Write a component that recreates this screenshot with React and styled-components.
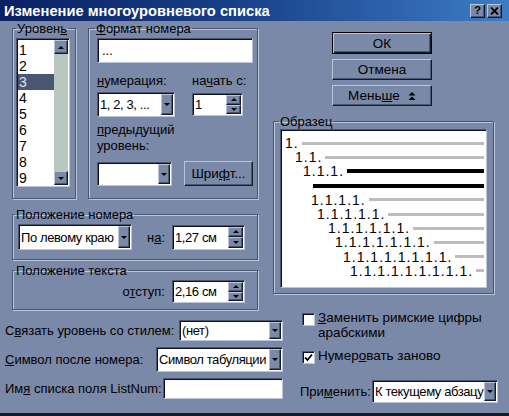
import React from 'react';
import styled, { createGlobalStyle, css } from 'styled-components';

const C = {
  bg: '#7b89a9',
  light: '#bcc5da',
  dark: '#4b556f',
  darker: '#151a27',
  track: '#b8c7bf',
  sel: '#4b5772',
};

const GlobalStyle = createGlobalStyle`
  html, body { margin: 0; padding: 0; background: ${C.bg}; }
  body { font-family: "Liberation Sans", Arial, sans-serif; font-size: 13px; color: #000; }
  * { box-sizing: border-box; }
`;

const sunken = css`
  background: #fff;
  border: 1px solid;
  border-color: ${C.dark} ${C.light} ${C.light} ${C.dark};
  box-shadow: inset 1px 1px 0 #0d111c;
`;

const raised = css`
  background: ${C.bg};
  border: 1px solid;
  border-color: ${C.light} ${C.darker} ${C.darker} ${C.light};
  box-shadow: inset -1px -1px 0 ${C.dark};
`;

const Window = styled.div`
  width: 509px;
  height: 416px;
  background: ${C.bg};
  border-bottom: 3px solid ${C.darker};
  display: flex;
  flex-direction: column;
  overflow: hidden;
`;

const TitleBar = styled.div`
  height: 21px;
  flex: none;
  display: flex;
  align-items: center;
  justify-content: space-between;
  padding: 0 7px 0 4px;
  background: linear-gradient(90deg, #0a2062 0%, #173f88 45%, #3d7cc4 100%);
`;

const Title = styled.span`
  color: #fff;
  font-family: "Liberation Sans", Arial, sans-serif;
  font-weight: bold;
  font-size: 14.7px;
  white-space: nowrap;
`;

const TitleButtons = styled.div`
  display: flex;
  gap: 2px;
`;

const TitleButton = styled.span`
  ${raised}
  width: 15px;
  height: 14px;
  display: flex;
  align-items: center;
  justify-content: center;
  font-weight: bold;
  font-size: 11px;
  line-height: 1;
`;

const Top = styled.div`
  display: flex;
  gap: 15px;
  padding-left: 12px;
`;

const LeftCol = styled.div`
  width: 246px;
  display: flex;
  flex-direction: column;
`;

const GroupRow = styled.div`
  display: flex;
  gap: 12px;
`;

const Group = styled.fieldset`
  margin: ${p => p.$mt || 0}px 0 0 0;
  padding: 0;
  min-width: 0;
  width: ${p => p.$w}px;
  height: ${p => p.$h}px;
  border: 1px solid ${C.dark};
  box-shadow: inset 1px 1px 0 ${C.light}, 1px 1px 0 ${C.light};
  display: flex;
  flex-direction: column;
`;

const Legend = styled.legend`
  padding: 0 1px;
  margin-left: ${p => p.$ml || 3}px;
  line-height: 15px;
  font-size: 13px;
`;

const U = styled.span`
  text-decoration: underline;
`;

const ListBox = styled.div`
  ${sunken}
  width: 54px;
  height: 149px;
  margin: 2px 0 0 3px;
  display: flex;
  padding: 1px;
`;

const ListItems = styled.div`
  flex: 1;
  padding-top: 2px;
  display: flex;
  flex-direction: column;
`;

const ListItem = styled.div`
  height: 16px;
  line-height: 16px;
  padding-left: 1px;
  font-size: 14px;
  ${p => p.$sel && css`
    background: ${C.sel};
    color: #dfe3ee;
  `}
`;

const ScrollBar = styled.div`
  width: 14px;
  background: ${C.track};
  display: flex;
  flex-direction: column;
  justify-content: space-between;
`;

const SmallBtn = styled.span`
  ${raised}
  width: 14px;
  height: 14px;
  display: flex;
  align-items: center;
  justify-content: center;
`;

const Tri = styled.span`
  width: 0;
  height: 0;
  border-left: 3px solid transparent;
  border-right: 3px solid transparent;
  ${p => p.$up
    ? css`border-bottom: 3px solid #000;`
    : css`border-top: 3px solid #000;`}
`;

const FormatInner = styled.div`
  display: flex;
  flex-direction: column;
  padding: 2px 0 0 8px;
`;

const TextBox = styled.div`
  ${sunken}
  width: ${p => p.$w}px;
  height: ${p => p.$h}px;
  display: flex;
  align-items: center;
  padding: 0 4px;
  flex: none;
  white-space: nowrap;
`;

const FormatRow = styled.div`
  display: flex;
  margin-top: ${p => p.$mt}px;
  gap: ${p => p.$gap || 0}px;
  align-items: flex-start;
`;

const FieldCol = styled.div`
  width: ${p => p.$w}px;
  display: flex;
  flex-direction: column;
  gap: ${p => p.$gap}px;
  align-items: flex-start;
`;

const Label = styled.span`
  line-height: 15px;
  white-space: nowrap;
  margin-left: ${p => (p.$auto ? 'auto' : '0')};
`;

const WrapLabel = styled.div`
  width: 95px;
  line-height: 16px;
  margin-top: 5px;
`;

const Select = styled.div`
  ${sunken}
  width: ${p => p.$w}px;
  height: ${p => p.$h}px;
  margin-top: ${p => p.$mt || 0}px;
  display: flex;
  padding: 1px;
  flex: none;
`;

const SelectValue = styled.span`
  flex: 1;
  min-width: 0;
  display: flex;
  align-items: center;
  padding-left: 1px;
  white-space: nowrap;
  overflow: hidden;
  font-size: 13px;
  letter-spacing: -0.4px;
`;

const DropBtn = styled.span`
  ${raised}
  width: 12px;
  flex: none;
  display: flex;
  align-items: center;
  justify-content: center;
`;

const Spin = styled.div`
  ${sunken}
  width: ${p => p.$w}px;
  height: ${p => p.$h}px;
  margin-top: ${p => p.$mt || 0}px;
  display: flex;
  padding: 1px;
  flex: none;
`;

const SpinButtons = styled.span`
  width: 15px;
  display: flex;
  flex-direction: column;
`;

const SpinBtn = styled.span`
  ${raised}
  flex: 1;
  display: flex;
  align-items: center;
  justify-content: center;
`;

const PushButton = styled.div`
  ${raised}
  width: ${p => p.$w}px;
  height: ${p => p.$h}px;
  display: flex;
  align-items: center;
  justify-content: center;
  gap: 8px;
  flex: none;
  font-size: 13.5px;
  ${p => p.$default && css`
    border: 1px solid #000;
    box-shadow: inset 1px 1px 0 ${C.light}, inset -1px -1px 0 ${C.darker}, inset -2px -2px 0 ${C.dark};
  `}
`;

const GroupRowInner = styled.div`
  display: flex;
  align-items: center;
  gap: 7px;
  padding: ${p => p.$pad};
  justify-content: ${p => p.$justify || 'flex-start'};
  margin-top: ${p => p.$mt}px;
`;

const RightCol = styled.div`
  width: 221px;
  display: flex;
  flex-direction: column;
`;

const ButtonStack = styled.div`
  display: flex;
  flex-direction: column;
  gap: 5px;
  margin: 11px 0 0 59px;
`;

const PreviewBox = styled.div`
  ${sunken}
  width: 207px;
  height: 159px;
  margin-left: 6px;
  padding: 6px 2px 0 1px;
  display: flex;
  flex-direction: column;
`;

const PreviewRow = styled.div`
  height: 14.2px;
  display: flex;
  align-items: center;
  padding-left: ${p => p.$indent}px;
`;

const PreviewNum = styled.span`
  font-size: 14px;
  line-height: 14px;
  letter-spacing: 1px;
  white-space: nowrap;
  margin-right: 3px;
`;

const PreviewLine = styled.span`
  flex: 1;
  height: ${p => (p.$dark ? 4 : 3)}px;
  background: ${p => (p.$dark ? '#000' : '#bdbdbd')};
`;

const Bottom = styled.div`
  display: flex;
  padding-left: 5px;
`;

const BottomLeft = styled.div`
  width: 278px;
  display: flex;
  flex-direction: column;
`;

const FieldRow = styled.div`
  display: flex;
  align-items: center;
  justify-content: space-between;
  margin-top: ${p => p.$mt}px;
`;

const BottomRight = styled.div`
  margin-left: 17px;
  width: 198px;
  display: flex;
  flex-direction: column;
`;

const CheckRow = styled.div`
  display: flex;
  align-items: flex-start;
  gap: 3px;
  padding-left: 2px;
  margin-top: ${p => p.$mt}px;
`;

const CheckBox = styled.span`
  ${sunken}
  width: 13px;
  height: 13px;
  flex: none;
  margin-top: 3px;
  display: flex;
  align-items: center;
  justify-content: center;
`;

const CheckText = styled.span`
  line-height: 15px;
  font-size: 13.5px;
`;

const DropSelect = ({ w, h, mt, children }) => (
  <Select $w={w} $h={h} $mt={mt}>
    <SelectValue>{children}</SelectValue>
    <DropBtn><Tri /></DropBtn>
  </Select>
);

const SpinBox = ({ w, h, mt, children }) => (
  <Spin $w={w} $h={h} $mt={mt}>
    <SelectValue>{children}</SelectValue>
    <SpinButtons>
      <SpinBtn><Tri $up /></SpinBtn>
      <SpinBtn><Tri /></SpinBtn>
    </SpinButtons>
  </Spin>
);

const previewRows = [
  { n: 1, indent: 3 },
  { n: 2, indent: 13 },
  { n: 3, indent: 21, dark: true },
  { n: 0, indent: 31, dark: true },
  { n: 4, indent: 29 },
  { n: 5, indent: 35 },
  { n: 6, indent: 46 },
  { n: 7, indent: 53 },
  { n: 8, indent: 61 },
  { n: 9, indent: 68 },
];

export default function App() {
  return (
    <>
      <GlobalStyle />
      <Window>
        <TitleBar>
          <Title>Изменение многоуровневого списка</Title>
          <TitleButtons>
            <TitleButton>?</TitleButton>
            <TitleButton>
              <svg width="9" height="8" viewBox="0 0 9 8">
                <path d="M1 0.5 L8 7.5 M8 0.5 L1 7.5" stroke="#000" strokeWidth="1.8" />
              </svg>
            </TitleButton>
          </TitleButtons>
        </TitleBar>

        <Top>
          <LeftCol>
            <GroupRow>
              <Group $w={64} $h={178}>
                <Legend $ml={3}>Уровен<U>ь</U></Legend>
                <ListBox>
                  <ListItems>
                    {[1, 2, 3, 4, 5, 6, 7, 8, 9].map(n => (
                      <ListItem key={n} $sel={n === 3}>{n}</ListItem>
                    ))}
                  </ListItems>
                  <ScrollBar>
                    <SmallBtn><Tri $up /></SmallBtn>
                    <SmallBtn><Tri /></SmallBtn>
                  </ScrollBar>
                </ListBox>
              </Group>
              <Group $w={170} $h={178}>
                <Legend $ml={6}><U>Ф</U>ормат номера</Legend>
                <FormatInner>
                  <TextBox $w={156} $h={25}>...</TextBox>
                  <FormatRow $mt={10}>
                    <FieldCol $w={95} $gap={4}>
                      <Label><U>н</U>умерация:</Label>
                      <DropSelect w={78} h={25}>1, 2, 3, ...</DropSelect>
                    </FieldCol>
                    <FieldCol $w={60} $gap={5}>
                      <Label>на<U>ч</U>ать с:</Label>
                      <SpinBox w={51} h={23}>1</SpinBox>
                    </FieldCol>
                  </FormatRow>
                  <WrapLabel><U>п</U>редыдущий уровень:</WrapLabel>
                  <FormatRow $mt={7} $gap={12}>
                    <DropSelect w={75} h={24} mt={1}></DropSelect>
                    <PushButton $w={69} $h={25}><span>Шри<U>ф</U>т...</span></PushButton>
                  </FormatRow>
                </FormatInner>
              </Group>
            </GroupRow>

            <Group $w={246} $h={53} $mt={8}>
              <Legend $ml={2}>Положение номера</Legend>
              <GroupRowInner $pad="0 12px 0 5px" $mt={2}>
                <DropSelect w={114} h={26}>По левому краю</DropSelect>
                <Label $auto>н<U>а</U>:</Label>
                <SpinBox w={73} h={25}>1,27 см</SpinBox>
              </GroupRowInner>
            </Group>

            <Group $w={246} $h={47} $mt={3}>
              <Legend $ml={2}>Положение текста</Legend>
              <GroupRowInner $pad="0 12px 0 5px" $mt={2} $justify="flex-end">
                <Label>о<U>т</U>ступ:</Label>
                <SpinBox w={73} h={23}>2,16 см</SpinBox>
              </GroupRowInner>
            </Group>
          </LeftCol>

          <RightCol>
            <ButtonStack>
              <PushButton $w={100} $h={22} $default><span>ОК</span></PushButton>
              <PushButton $w={100} $h={21}><span>Отмена</span></PushButton>
              <PushButton $w={100} $h={21}>
                <span>Мень<U>ш</U>е</span>
                <svg width="8" height="8" viewBox="0 0 8 8">
                  <path d="M0.5 3.5 L4 0 L7.5 3.5 Z M0.5 8 L4 4.5 L7.5 8 Z" fill="#000" />
                </svg>
              </PushButton>
            </ButtonStack>
            <Group $w={221} $h={180} $mt={8}>
              <Legend $ml={5}>Образец</Legend>
              <PreviewBox>
                {previewRows.map((r, i) => (
                  <PreviewRow key={i} $indent={r.indent}>
                    {r.n > 0 && <PreviewNum>{'1.'.repeat(r.n)}</PreviewNum>}
                    <PreviewLine $dark={r.dark} />
                  </PreviewRow>
                ))}
              </PreviewBox>
            </Group>
          </RightCol>
        </Top>

        <Bottom>
          <BottomLeft>
            <FieldRow $mt={10}>
              <Label>С<U>в</U>язать уровень со стилем:</Label>
              <DropSelect w={104} h={21}>(нет)</DropSelect>
            </FieldRow>
            <FieldRow $mt={6}>
              <Label><U>С</U>имвол после номера:</Label>
              <DropSelect w={127} h={25}>Символ табуляции</DropSelect>
            </FieldRow>
            <FieldRow $mt={6}>
              <Label>Им<U>я</U> списка поля ListNum:</Label>
              <TextBox $w={120} $h={21} />
            </FieldRow>
          </BottomLeft>
          <BottomRight>
            <CheckRow $mt={0}>
              <CheckBox />
              <CheckText><U>З</U>аменить римские цифры<br />арабскими</CheckText>
            </CheckRow>
            <CheckRow $mt={8}>
              <CheckBox>
                <svg width="9" height="9" viewBox="0 0 9 9">
                  <path d="M1 4.5 L3.5 7 L8 1.5" stroke="#000" strokeWidth="1.8" fill="none" />
                </svg>
              </CheckBox>
              <CheckText>Нумер<U>о</U>вать заново</CheckText>
            </CheckRow>
            <FieldRow $mt={16}>
              <Label>При<U>м</U>енить:</Label>
              <DropSelect w={126} h={23}>К текущему абзацу</DropSelect>
            </FieldRow>
          </BottomRight>
        </Bottom>
      </Window>
    </>
  );
}
